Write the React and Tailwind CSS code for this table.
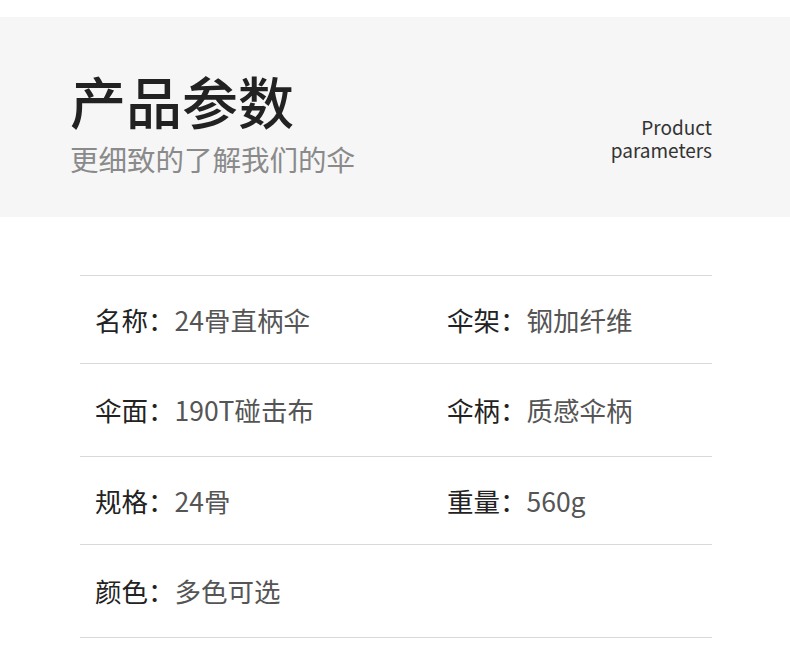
export default function App() {
  const rows = [
    { h: "h-[88px]", a: ["名称：", "24骨直柄伞"], b: ["伞架：", "钢加纤维"] },
    { h: "h-[93px]", a: ["伞面：", "190T碰击布"], b: ["伞柄：", "质感伞柄"] },
    { h: "h-[88px]", a: ["规格：", "24骨"], b: ["重量：", "560g"] },
    { h: "h-[93px]", a: ["颜色：", "多色可选"], b: null },
  ];
  return (
    <div className="w-[790px] h-[665px] bg-white overflow-hidden" style={{ fontFamily: '"Noto Sans CJK SC", "Noto Sans", sans-serif' }}>
      <div className="h-[17px]" />
      <div className="h-[200px] bg-[#f6f6f6] flex items-start justify-between pl-[70px] pr-[78px]">
        <div className="pt-[47px]">
          <div className="text-[56px] leading-[72px] font-medium text-[#222]">产品参数</div>
          <div className="text-[28.5px] leading-[40px] text-[#8a8a8a] mt-[3px]">更细致的了解我们的伞</div>
        </div>
        <div className="pt-[98px] text-right text-[19px] leading-[23px] text-[#333]">
          <div>Product</div>
          <div>parameters</div>
        </div>
      </div>
      <div className="w-[632px] ml-[80px] mt-[58px] border-t border-[#d9d9d9]">
        {rows.map((r, i) => (
          <div key={i} className={`${r.h} border-b border-[#d9d9d9] grid grid-cols-[352px_1fr] items-center pl-[15px] text-[26.5px]`}>
            <div>
              <span className="text-[#222]">{r.a[0]}</span>
              <span className="text-[#555]">{r.a[1]}</span>
            </div>
            <div>
              {r.b && (
                <>
                  <span className="text-[#222]">{r.b[0]}</span>
                  <span className="text-[#555]">{r.b[1]}</span>
                </>
              )}
            </div>
          </div>
        ))}
      </div>
    </div>
  );
}
